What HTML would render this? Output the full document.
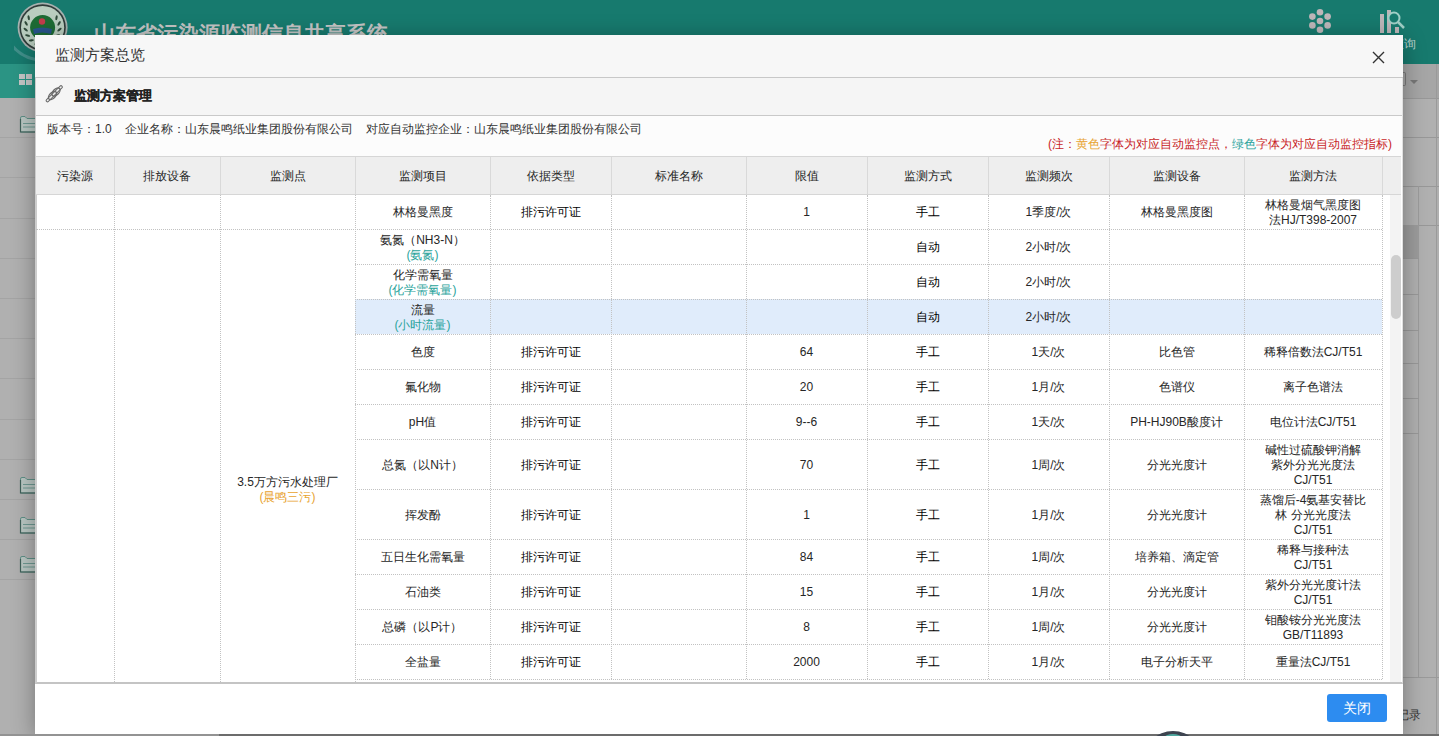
<!DOCTYPE html>
<html><head><meta charset="utf-8"><style>
*{box-sizing:border-box}
html,body{margin:0;padding:0}
body{width:1439px;height:736px;overflow:hidden;position:relative;background:#b0b0b0;font-family:"Liberation Sans",sans-serif;font-size:12px;color:#333}
.abs{position:absolute}
.c{position:absolute;padding-top:2px;display:flex;align-items:center;justify-content:center;text-align:center;line-height:15px;font-size:12px;color:#262626}
.k{color:#000}
.g{color:#2aa39b}
.o{color:#e8a330}
.vl{position:absolute;width:0;border-left:1px dotted #c2c2c2}
.hl{position:absolute;height:0;border-top:1px dotted #c2c2c2}
.hv{position:absolute;width:1px;background:#d9d9d9}
</style></head><body>

<div class="abs" style="left:0;top:0;width:1439px;height:64px;background:#177a6e"></div>
<div class="abs" style="left:0;top:64px;width:35px;height:34px;background:#2b9484"></div>
<div class="abs" style="left:1403px;top:64px;width:36px;height:34px;background:#a6a6a6"></div>
<div class="abs" style="left:94px;top:20px;font-size:21px;font-weight:bold;color:#c4c4c4;letter-spacing:0px;white-space:nowrap">山东省污染源监测信息共享系统</div>
<svg class="abs" style="left:14px;top:0" width="60" height="62" viewBox="0 0 60 62"><path d="M-6 40 Q8 62 34 60" fill="none" stroke="#8fb7c0" stroke-width="3" opacity="0.35"/><circle cx="28.6" cy="27.5" r="25" fill="#a7b1af"/><circle cx="28.6" cy="27.5" r="23.2" fill="#2f3b39"/><circle cx="28.6" cy="27.5" r="21.6" fill="#b9cdbf"/><ellipse cx="22.8" cy="43.5" rx="2.6" ry="1.1" transform="rotate(155 22.8 43.5)" fill="#2f4a3a"/><ellipse cx="17.4" cy="40.3" rx="2.6" ry="1.1" transform="rotate(176 17.4 40.3)" fill="#2f4a3a"/><ellipse cx="13.6" cy="35.5" rx="2.6" ry="1.1" transform="rotate(197 13.6 35.5)" fill="#2f4a3a"/><ellipse cx="11.7" cy="29.6" rx="2.6" ry="1.1" transform="rotate(218 11.7 29.6)" fill="#2f4a3a"/><ellipse cx="12.1" cy="23.4" rx="2.6" ry="1.1" transform="rotate(239 12.1 23.4)" fill="#2f4a3a"/><ellipse cx="14.7" cy="17.7" rx="2.6" ry="1.1" transform="rotate(260 14.7 17.7)" fill="#2f4a3a"/><ellipse cx="34.4" cy="43.5" rx="2.6" ry="1.1" transform="rotate(25 34.4 43.5)" fill="#2f4a3a"/><ellipse cx="39.8" cy="40.3" rx="2.6" ry="1.1" transform="rotate(4 39.8 40.3)" fill="#2f4a3a"/><ellipse cx="43.6" cy="35.5" rx="2.6" ry="1.1" transform="rotate(-17 43.6 35.5)" fill="#2f4a3a"/><ellipse cx="45.5" cy="29.6" rx="2.6" ry="1.1" transform="rotate(-38 45.5 29.6)" fill="#2f4a3a"/><ellipse cx="45.1" cy="23.4" rx="2.6" ry="1.1" transform="rotate(-59 45.1 23.4)" fill="#2f4a3a"/><ellipse cx="42.5" cy="17.7" rx="2.6" ry="1.1" transform="rotate(-80 42.5 17.7)" fill="#2f4a3a"/><circle cx="28.6" cy="27.5" r="12.5" fill="#1d6b34"/><circle cx="28" cy="21.5" r="3.2" fill="#c33c4c"/><path d="M19 29 Q28 26 38 29 L37 34 Q28 31 20 34 Z" fill="#2a4f9a" opacity="0.85"/></svg>
<svg class="abs" style="left:1305px;top:6px" width="30" height="30"><circle cx="15" cy="15" r="3.3" fill="#bdb6b9"/><circle cx="15.00" cy="6.20" r="3.3" fill="#bdb6b9"/><circle cx="7.38" cy="10.60" r="3.3" fill="#bdb6b9"/><circle cx="7.38" cy="19.40" r="3.3" fill="#bdb6b9"/><circle cx="15.00" cy="23.80" r="3.3" fill="#bdb6b9"/><circle cx="22.62" cy="19.40" r="3.3" fill="#bdb6b9"/><circle cx="22.62" cy="10.60" r="3.3" fill="#bdb6b9"/></svg>
<svg class="abs" style="left:1376px;top:6px" width="34" height="30">
<rect x="4" y="8" width="4" height="19" fill="#bdb6b9"/>
<rect x="11" y="4" width="4" height="23" fill="#bdb6b9"/>
<rect x="19" y="21" width="4" height="6" fill="#bdb6b9"/>
<circle cx="18" cy="12" r="5.5" fill="#177a6e" stroke="#9fcfc6" stroke-width="2"/>
<line x1="22" y1="16" x2="28" y2="22" stroke="#9fcfc6" stroke-width="2.5"/>
</svg>
<div class="abs" style="left:1392px;top:36px;font-size:12px;color:#bcd3ce">查询</div>
<div class="abs" style="left:19px;top:74px;width:6px;height:5px;background:#c6c6c6"></div>
<div class="abs" style="left:26px;top:74px;width:6px;height:5px;background:#c6c6c6"></div>
<div class="abs" style="left:19px;top:80px;width:6px;height:5px;background:#c6c6c6"></div>
<div class="abs" style="left:26px;top:80px;width:6px;height:5px;background:#c6c6c6"></div>
<div class="abs" style="left:0;top:137px;width:35px;height:1px;background:#a4a4a4"></div>
<div class="abs" style="left:0;top:177px;width:35px;height:1px;background:#a4a4a4"></div>
<div class="abs" style="left:0;top:218px;width:35px;height:1px;background:#a4a4a4"></div>
<div class="abs" style="left:0;top:258px;width:35px;height:1px;background:#a4a4a4"></div>
<div class="abs" style="left:0;top:298px;width:35px;height:1px;background:#a4a4a4"></div>
<div class="abs" style="left:0;top:338px;width:35px;height:1px;background:#a4a4a4"></div>
<div class="abs" style="left:0;top:378px;width:35px;height:1px;background:#a4a4a4"></div>
<div class="abs" style="left:0;top:419px;width:35px;height:1px;background:#a4a4a4"></div>
<div class="abs" style="left:0;top:459px;width:35px;height:1px;background:#a4a4a4"></div>
<div class="abs" style="left:0;top:499px;width:35px;height:1px;background:#a4a4a4"></div>
<div class="abs" style="left:0;top:539px;width:35px;height:1px;background:#a4a4a4"></div>
<div class="abs" style="left:0;top:579px;width:35px;height:1px;background:#a4a4a4"></div>
<svg class="abs" style="left:19px;top:116px" width="17" height="17"><path d="M1.5 2 Q1.5 0.5 3 0.5 L6 0.5 L8 2.5 L17 2.5 L17 16 L1.5 16 Z" fill="#b9c6c2" stroke="#5f8f86" stroke-width="1"/><path d="M1.5 3 L1.5 16 L17 16" fill="none" stroke="#3f5f58" stroke-width="1.2"/><line x1="4" y1="7.5" x2="17" y2="7.5" stroke="#6e9891"/><line x1="4" y1="11" x2="17" y2="11" stroke="#6e9891"/></svg>
<svg class="abs" style="left:19px;top:477px" width="17" height="17"><path d="M1.5 2 Q1.5 0.5 3 0.5 L6 0.5 L8 2.5 L17 2.5 L17 16 L1.5 16 Z" fill="#b9c6c2" stroke="#5f8f86" stroke-width="1"/><path d="M1.5 3 L1.5 16 L17 16" fill="none" stroke="#3f5f58" stroke-width="1.2"/><line x1="4" y1="7.5" x2="17" y2="7.5" stroke="#6e9891"/><line x1="4" y1="11" x2="17" y2="11" stroke="#6e9891"/></svg>
<svg class="abs" style="left:19px;top:517px" width="17" height="17"><path d="M1.5 2 Q1.5 0.5 3 0.5 L6 0.5 L8 2.5 L17 2.5 L17 16 L1.5 16 Z" fill="#b9c6c2" stroke="#5f8f86" stroke-width="1"/><path d="M1.5 3 L1.5 16 L17 16" fill="none" stroke="#3f5f58" stroke-width="1.2"/><line x1="4" y1="7.5" x2="17" y2="7.5" stroke="#6e9891"/><line x1="4" y1="11" x2="17" y2="11" stroke="#6e9891"/></svg>
<svg class="abs" style="left:19px;top:556px" width="17" height="17"><path d="M1.5 2 Q1.5 0.5 3 0.5 L6 0.5 L8 2.5 L17 2.5 L17 16 L1.5 16 Z" fill="#b9c6c2" stroke="#5f8f86" stroke-width="1"/><path d="M1.5 3 L1.5 16 L17 16" fill="none" stroke="#3f5f58" stroke-width="1.2"/><line x1="4" y1="7.5" x2="17" y2="7.5" stroke="#6e9891"/><line x1="4" y1="11" x2="17" y2="11" stroke="#6e9891"/></svg>
<div class="abs" style="left:1403px;top:98px;width:36px;height:1px;background:#989898"></div>
<div class="abs" style="left:1403px;top:137px;width:36px;height:1px;background:#989898"></div>
<div class="abs" style="left:1403px;top:186px;width:36px;height:1px;background:#989898"></div>
<div class="abs" style="left:1403px;top:225px;width:36px;height:1px;background:#989898"></div>
<div class="abs" style="left:1403px;top:225px;width:15px;height:33px;background:#9c9c9c"></div>
<div class="abs" style="left:1418px;top:186px;width:1px;height:491px;background:#9c9c9c"></div>
<div class="abs" style="left:1403px;top:258px;width:16px;height:1px;background:#999"></div>
<div class="abs" style="left:1403px;top:294px;width:16px;height:1px;background:#999"></div>
<div class="abs" style="left:1403px;top:330px;width:16px;height:1px;background:#999"></div>
<div class="abs" style="left:1403px;top:363px;width:16px;height:1px;background:#999"></div>
<div class="abs" style="left:1403px;top:398px;width:16px;height:1px;background:#999"></div>
<div class="abs" style="left:1403px;top:433px;width:16px;height:1px;background:#999"></div>
<div class="abs" style="left:1403px;top:677px;width:36px;height:1px;background:#9a9a9a"></div>
<div class="abs" style="left:1436px;top:64px;width:1px;height:672px;background:#9a9a9a"></div>
<div class="abs" style="left:1397px;top:707px;font-size:12px;color:#333">记录</div>
<div class="abs" style="left:1399px;top:72px;width:7px;height:14px;border:1px solid #7a7a7a;border-left:none;border-radius:0 2px 2px 0"></div>
<div class="abs" style="left:1410px;top:80px;width:0;height:0;border-left:4px solid transparent;border-right:4px solid transparent;border-top:4px solid #777"></div>
<div class="abs" style="left:35px;top:35px;width:1368px;height:699px;background:#fff;box-shadow:0 4px 22px rgba(0,0,0,0.33)"></div>
<div class="abs" style="left:35px;top:35px;width:1368px;height:43px;background:#f7f7f7;border-bottom:1px solid #c8c8c8"></div>
<div class="abs" style="left:55px;top:46px;font-size:15px;color:#333;white-space:nowrap">监测方案总览</div>
<svg class="abs" style="left:1372px;top:51px" width="13" height="13"><path d="M1 1 L12 12 M12 1 L1 12" stroke="#333" stroke-width="1.4"/></svg>
<div class="abs" style="left:35px;top:78px;width:1368px;height:606px;border:1px solid #c9c9c9;border-left:2px solid #cdcdcd;border-top:none;border-right:1px solid #e0e0e0;border-bottom:2px solid #c4c4c4;background:#fff"></div>
<div class="abs" style="left:36px;top:78px;width:1366px;height:38px;background:#f5f5f5;border-bottom:1px solid #c9c9c9"></div>
<svg class="abs" style="left:44px;top:83px" width="20" height="20"><path d="M3.5 17.5 L17 4" stroke="#6a6a6a" stroke-width="3.6" stroke-linecap="round"/><path d="M3.5 17.5 L17 4" stroke="#f2f2f2" stroke-width="1.6" stroke-linecap="round"/><ellipse cx="8.5" cy="12.5" rx="5" ry="2.9" transform="rotate(-45 8.5 12.5)" fill="none" stroke="#6a6a6a" stroke-width="1.3"/><ellipse cx="12" cy="9" rx="5" ry="2.9" transform="rotate(-45 12 9)" fill="none" stroke="#6a6a6a" stroke-width="1.3"/></svg>
<div class="abs" style="left:74px;top:87px;font-size:13px;font-weight:bold;color:#222;-webkit-text-stroke:0.25px #222;white-space:nowrap">监测方案管理</div>
<div class="abs" style="left:36px;top:116px;width:1366px;height:40px;background:#fcfcfc"></div>
<div class="abs" style="left:47px;top:121px;font-size:12px;color:#333;white-space:nowrap">版本号：1.0&nbsp;&nbsp;&nbsp;&nbsp;企业名称：山东晨鸣纸业集团股份有限公司&nbsp;&nbsp;&nbsp;&nbsp;对应自动监控企业：山东晨鸣纸业集团股份有限公司</div>
<div class="abs" style="left:1048px;top:136px;font-size:12px;color:#c81e28;white-space:nowrap">(注：<span class="o">黄色</span>字体为对应自动监控点，<span class="g">绿色</span>字体为对应自动监控指标)</div>
<div class="abs" style="left:36px;top:156px;width:1365px;height:39px;background:#eeeeee;border-top:1px solid #d6d6d6;border-bottom:1px solid #d6d6d6"></div>
<div class="c" style="left:36px;top:157px;width:78px;height:37px;padding-top:1px">污染源</div>
<div class="c" style="left:114px;top:157px;width:106px;height:37px;padding-top:1px">排放设备</div>
<div class="c" style="left:220px;top:157px;width:135px;height:37px;padding-top:1px">监测点</div>
<div class="c" style="left:355px;top:157px;width:135px;height:37px;padding-top:1px">监测项目</div>
<div class="c" style="left:490px;top:157px;width:121px;height:37px;padding-top:1px">依据类型</div>
<div class="c" style="left:611px;top:157px;width:135px;height:37px;padding-top:1px">标准名称</div>
<div class="c" style="left:746px;top:157px;width:121px;height:37px;padding-top:1px">限值</div>
<div class="c" style="left:867px;top:157px;width:121px;height:37px;padding-top:1px">监测方式</div>
<div class="c" style="left:988px;top:157px;width:121px;height:37px;padding-top:1px">监测频次</div>
<div class="c" style="left:1109px;top:157px;width:135px;height:37px;padding-top:1px">监测设备</div>
<div class="c" style="left:1244px;top:157px;width:138px;height:37px;padding-top:1px">监测方法</div>
<div class="hv" style="left:114px;top:157px;height:37px"></div>
<div class="hv" style="left:220px;top:157px;height:37px"></div>
<div class="hv" style="left:355px;top:157px;height:37px"></div>
<div class="hv" style="left:490px;top:157px;height:37px"></div>
<div class="hv" style="left:611px;top:157px;height:37px"></div>
<div class="hv" style="left:746px;top:157px;height:37px"></div>
<div class="hv" style="left:867px;top:157px;height:37px"></div>
<div class="hv" style="left:988px;top:157px;height:37px"></div>
<div class="hv" style="left:1109px;top:157px;height:37px"></div>
<div class="hv" style="left:1244px;top:157px;height:37px"></div>
<div class="hv" style="left:1382px;top:157px;height:37px"></div>
<div class="abs" style="left:355px;top:299px;width:1027px;height:35px;background:#e0ecfb"></div>
<div class="abs" style="left:1390px;top:195px;width:11px;height:487px;background:#f3f3f3"></div>
<div class="abs" style="left:1391px;top:255px;width:10px;height:64px;background:#cdcdcd;border-radius:5px"></div>
<div class="hl" style="left:36px;top:229px;width:1346px"></div>
<div class="hl" style="left:355px;top:264px;width:1027px"></div>
<div class="hl" style="left:355px;top:299px;width:1027px"></div>
<div class="hl" style="left:355px;top:334px;width:1027px"></div>
<div class="hl" style="left:355px;top:369px;width:1027px"></div>
<div class="hl" style="left:355px;top:404px;width:1027px"></div>
<div class="hl" style="left:355px;top:439px;width:1027px"></div>
<div class="hl" style="left:355px;top:489px;width:1027px"></div>
<div class="hl" style="left:355px;top:539px;width:1027px"></div>
<div class="hl" style="left:355px;top:574px;width:1027px"></div>
<div class="hl" style="left:355px;top:609px;width:1027px"></div>
<div class="hl" style="left:355px;top:644px;width:1027px"></div>
<div class="hl" style="left:355px;top:679px;width:1027px"></div>
<div class="vl" style="left:114px;top:195px;height:487px"></div>
<div class="vl" style="left:220px;top:195px;height:487px"></div>
<div class="vl" style="left:355px;top:195px;height:487px"></div>
<div class="vl" style="left:490px;top:195px;height:484px"></div>
<div class="vl" style="left:611px;top:195px;height:484px"></div>
<div class="vl" style="left:746px;top:195px;height:484px"></div>
<div class="vl" style="left:867px;top:195px;height:484px"></div>
<div class="vl" style="left:988px;top:195px;height:484px"></div>
<div class="vl" style="left:1109px;top:195px;height:484px"></div>
<div class="vl" style="left:1244px;top:195px;height:484px"></div>
<div class="vl" style="left:1382px;top:195px;height:484px"></div>
<div class="c" style="left:355px;top:194px;width:135px;height:35px"><div>林格曼黑度</div></div>
<div class="c k" style="left:490px;top:194px;width:121px;height:35px"><div>排污许可证</div></div>
<div class="c" style="left:746px;top:194px;width:121px;height:35px"><div>1</div></div>
<div class="c k" style="left:867px;top:194px;width:121px;height:35px"><div>手工</div></div>
<div class="c" style="left:988px;top:194px;width:121px;height:35px"><div>1季度/次</div></div>
<div class="c" style="left:1109px;top:194px;width:135px;height:35px"><div>林格曼黑度图</div></div>
<div class="c" style="left:1244px;top:194px;width:138px;height:35px"><div>林格曼烟气黑度图<br>法HJ/T398-2007</div></div>
<div class="c" style="left:355px;top:229px;width:135px;height:35px"><div>氨氮（NH3-N）<br><span class=g>(氨氮)</span></div></div>
<div class="c k" style="left:867px;top:229px;width:121px;height:35px"><div>自动</div></div>
<div class="c" style="left:988px;top:229px;width:121px;height:35px"><div>2小时/次</div></div>
<div class="c" style="left:355px;top:264px;width:135px;height:35px"><div>化学需氧量<br><span class=g>(化学需氧量)</span></div></div>
<div class="c k" style="left:867px;top:264px;width:121px;height:35px"><div>自动</div></div>
<div class="c" style="left:988px;top:264px;width:121px;height:35px"><div>2小时/次</div></div>
<div class="c" style="left:355px;top:299px;width:135px;height:35px"><div>流量<br><span class=g>(小时流量)</span></div></div>
<div class="c k" style="left:867px;top:299px;width:121px;height:35px"><div>自动</div></div>
<div class="c" style="left:988px;top:299px;width:121px;height:35px"><div>2小时/次</div></div>
<div class="c" style="left:355px;top:334px;width:135px;height:35px"><div>色度</div></div>
<div class="c k" style="left:490px;top:334px;width:121px;height:35px"><div>排污许可证</div></div>
<div class="c" style="left:746px;top:334px;width:121px;height:35px"><div>64</div></div>
<div class="c k" style="left:867px;top:334px;width:121px;height:35px"><div>手工</div></div>
<div class="c" style="left:988px;top:334px;width:121px;height:35px"><div>1天/次</div></div>
<div class="c" style="left:1109px;top:334px;width:135px;height:35px"><div>比色管</div></div>
<div class="c" style="left:1244px;top:334px;width:138px;height:35px"><div>稀释倍数法CJ/T51</div></div>
<div class="c" style="left:355px;top:369px;width:135px;height:35px"><div>氟化物</div></div>
<div class="c k" style="left:490px;top:369px;width:121px;height:35px"><div>排污许可证</div></div>
<div class="c" style="left:746px;top:369px;width:121px;height:35px"><div>20</div></div>
<div class="c k" style="left:867px;top:369px;width:121px;height:35px"><div>手工</div></div>
<div class="c" style="left:988px;top:369px;width:121px;height:35px"><div>1月/次</div></div>
<div class="c" style="left:1109px;top:369px;width:135px;height:35px"><div>色谱仪</div></div>
<div class="c" style="left:1244px;top:369px;width:138px;height:35px"><div>离子色谱法</div></div>
<div class="c" style="left:355px;top:404px;width:135px;height:35px"><div>pH值</div></div>
<div class="c k" style="left:490px;top:404px;width:121px;height:35px"><div>排污许可证</div></div>
<div class="c" style="left:746px;top:404px;width:121px;height:35px"><div>9--6</div></div>
<div class="c k" style="left:867px;top:404px;width:121px;height:35px"><div>手工</div></div>
<div class="c" style="left:988px;top:404px;width:121px;height:35px"><div>1天/次</div></div>
<div class="c" style="left:1109px;top:404px;width:135px;height:35px"><div>PH-HJ90B酸度计</div></div>
<div class="c" style="left:1244px;top:404px;width:138px;height:35px"><div>电位计法CJ/T51</div></div>
<div class="c" style="left:355px;top:439px;width:135px;height:50px"><div>总氮（以N计）</div></div>
<div class="c k" style="left:490px;top:439px;width:121px;height:50px"><div>排污许可证</div></div>
<div class="c" style="left:746px;top:439px;width:121px;height:50px"><div>70</div></div>
<div class="c k" style="left:867px;top:439px;width:121px;height:50px"><div>手工</div></div>
<div class="c" style="left:988px;top:439px;width:121px;height:50px"><div>1周/次</div></div>
<div class="c" style="left:1109px;top:439px;width:135px;height:50px"><div>分光光度计</div></div>
<div class="c" style="left:1244px;top:439px;width:138px;height:50px"><div>碱性过硫酸钾消解<br>紫外分光光度法<br>CJ/T51</div></div>
<div class="c" style="left:355px;top:489px;width:135px;height:50px"><div>挥发酚</div></div>
<div class="c k" style="left:490px;top:489px;width:121px;height:50px"><div>排污许可证</div></div>
<div class="c" style="left:746px;top:489px;width:121px;height:50px"><div>1</div></div>
<div class="c k" style="left:867px;top:489px;width:121px;height:50px"><div>手工</div></div>
<div class="c" style="left:988px;top:489px;width:121px;height:50px"><div>1月/次</div></div>
<div class="c" style="left:1109px;top:489px;width:135px;height:50px"><div>分光光度计</div></div>
<div class="c" style="left:1244px;top:489px;width:138px;height:50px"><div>蒸馏后-4氨基安替比<br>林 分光光度法<br>CJ/T51</div></div>
<div class="c" style="left:355px;top:539px;width:135px;height:35px"><div>五日生化需氧量</div></div>
<div class="c k" style="left:490px;top:539px;width:121px;height:35px"><div>排污许可证</div></div>
<div class="c" style="left:746px;top:539px;width:121px;height:35px"><div>84</div></div>
<div class="c k" style="left:867px;top:539px;width:121px;height:35px"><div>手工</div></div>
<div class="c" style="left:988px;top:539px;width:121px;height:35px"><div>1周/次</div></div>
<div class="c" style="left:1109px;top:539px;width:135px;height:35px"><div>培养箱、滴定管</div></div>
<div class="c" style="left:1244px;top:539px;width:138px;height:35px"><div>稀释与接种法<br>CJ/T51</div></div>
<div class="c" style="left:355px;top:574px;width:135px;height:35px"><div>石油类</div></div>
<div class="c k" style="left:490px;top:574px;width:121px;height:35px"><div>排污许可证</div></div>
<div class="c" style="left:746px;top:574px;width:121px;height:35px"><div>15</div></div>
<div class="c k" style="left:867px;top:574px;width:121px;height:35px"><div>手工</div></div>
<div class="c" style="left:988px;top:574px;width:121px;height:35px"><div>1月/次</div></div>
<div class="c" style="left:1109px;top:574px;width:135px;height:35px"><div>分光光度计</div></div>
<div class="c" style="left:1244px;top:574px;width:138px;height:35px"><div>紫外分光光度计法<br>CJ/T51</div></div>
<div class="c" style="left:355px;top:609px;width:135px;height:35px"><div>总磷（以P计）</div></div>
<div class="c k" style="left:490px;top:609px;width:121px;height:35px"><div>排污许可证</div></div>
<div class="c" style="left:746px;top:609px;width:121px;height:35px"><div>8</div></div>
<div class="c k" style="left:867px;top:609px;width:121px;height:35px"><div>手工</div></div>
<div class="c" style="left:988px;top:609px;width:121px;height:35px"><div>1周/次</div></div>
<div class="c" style="left:1109px;top:609px;width:135px;height:35px"><div>分光光度计</div></div>
<div class="c" style="left:1244px;top:609px;width:138px;height:35px"><div>钼酸铵分光光度法<br>GB/T11893</div></div>
<div class="c" style="left:355px;top:644px;width:135px;height:35px"><div>全盐量</div></div>
<div class="c k" style="left:490px;top:644px;width:121px;height:35px"><div>排污许可证</div></div>
<div class="c" style="left:746px;top:644px;width:121px;height:35px"><div>2000</div></div>
<div class="c k" style="left:867px;top:644px;width:121px;height:35px"><div>手工</div></div>
<div class="c" style="left:988px;top:644px;width:121px;height:35px"><div>1月/次</div></div>
<div class="c" style="left:1109px;top:644px;width:135px;height:35px"><div>电子分析天平</div></div>
<div class="c" style="left:1244px;top:644px;width:138px;height:35px"><div>重量法CJ/T51</div></div>
<div class="c" style="left:220px;top:474px;width:135px;height:30px;padding-top:0;top:475px"><div style="white-space:nowrap">3.5万方污水处理厂<br><span class="o">(晨鸣三污)</span></div></div>
<div class="abs" style="left:1327px;top:694px;width:60px;height:28px;background:#2d8cf0;border-radius:3px;color:#fff;font-size:14px;line-height:28px;text-align:center">关闭</div>
<div class="abs" style="left:0;top:734px;width:219px;height:2px;background:#939393"></div>
<div class="abs" style="left:219px;top:734px;width:1220px;height:2px;background:#6c6c6c"></div>
<svg class="abs" style="left:1140px;top:729px" width="66" height="7"><circle cx="33" cy="32" r="30" fill="#3d4450"/><ellipse cx="33" cy="8" rx="8" ry="3" fill="#4fa9a0"/></svg>
</body></html>
